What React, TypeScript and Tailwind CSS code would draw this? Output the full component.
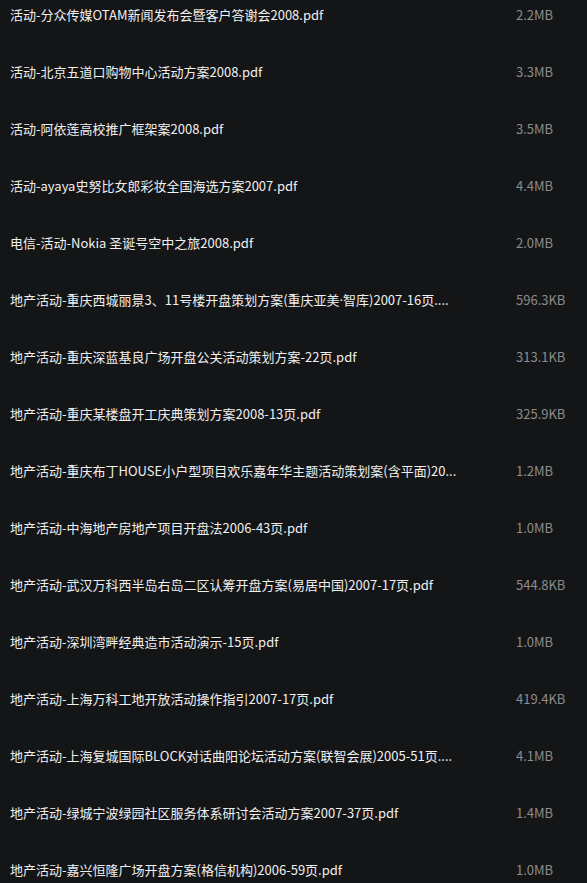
import React from "react";

const files: [React.ReactNode, string][] = [
  ["活动-分众传媒OTAM新闻发布会暨客户答谢会2008.pdf", "2.2MB"],
  ["活动-北京五道口购物中心活动方案2008.pdf", "3.3MB"],
  ["活动-阿依莲高校推广框架案2008.pdf", "3.5MB"],
  ["活动-ayaya史努比女郎彩妆全国海选方案2007.pdf", "4.4MB"],
  ["电信-活动-Nokia 圣诞号空中之旅2008.pdf", "2.0MB"],
  [
    <>
      地产活动-重庆西城丽景3、11号楼开盘策划方案(重庆亚美
      <span style={{ fontFamily: '"Noto Sans", sans-serif' }}>·</span>
      智库)2007-16页....
    </>,
    "596.3KB",
  ],
  ["地产活动-重庆深蓝基良广场开盘公关活动策划方案-22页.pdf", "313.1KB"],
  ["地产活动-重庆某楼盘开工庆典策划方案2008-13页.pdf", "325.9KB"],
  ["地产活动-重庆布丁HOUSE小户型项目欢乐嘉年华主题活动策划案(含平面)20...", "1.2MB"],
  ["地产活动-中海地产房地产项目开盘法2006-43页.pdf", "1.0MB"],
  ["地产活动-武汉万科西半岛右岛二区认筹开盘方案(易居中国)2007-17页.pdf", "544.8KB"],
  ["地产活动-深圳湾畔经典造市活动演示-15页.pdf", "1.0MB"],
  ["地产活动-上海万科工地开放活动操作指引2007-17页.pdf", "419.4KB"],
  ["地产活动-上海复城国际BLOCK对话曲阳论坛活动方案(联智会展)2005-51页....", "4.1MB"],
  ["地产活动-绿城宁波绿园社区服务体系研讨会活动方案2007-37页.pdf", "1.4MB"],
  ["地产活动-嘉兴恒隆广场开盘方案(格信机构)2006-59页.pdf", "1.0MB"],
];

export default function App() {
  return (
    <div
      lang="zh-CN"
      className="w-[587px] h-[883px] overflow-hidden bg-[#141517]"
      style={{ fontFamily: '"Noto Sans CJK SC", "Noto Sans", sans-serif' }}
    >
      <div className="-mt-[14px] flex flex-col">
        {files.map(([name, size], i) => (
          <div key={i} className="flex h-[57px] items-center text-[13px] leading-[20px]">
            <div className="w-[516px] shrink-0 pl-[10px]">
              <div className="whitespace-nowrap text-[#f0f0f0]">{name}</div>
            </div>
            <div className="whitespace-nowrap text-[#8c8c8c]">{size}</div>
          </div>
        ))}
      </div>
    </div>
  );
}
